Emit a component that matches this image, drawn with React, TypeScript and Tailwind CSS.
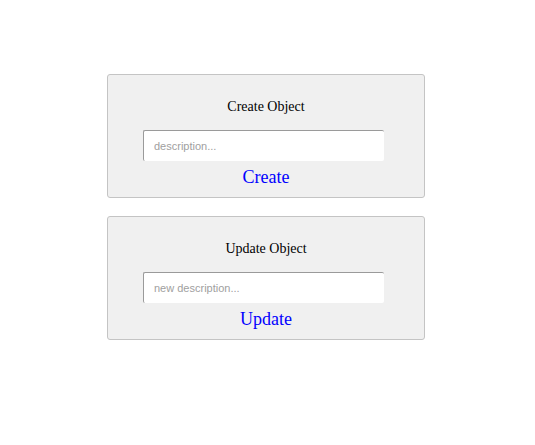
export default function App() {
  return (
    <div className="min-h-[445px] bg-white pl-[107px] pt-[74px] font-['Liberation_Serif',serif]">
      <Panel title="Create Object" placeholder="description..." action="Create" />
      <div className="h-[18px]" />
      <Panel title="Update Object" placeholder="new description..." action="Update" />
    </div>
  );
}

function Panel({ title, placeholder, action }: { title: string; placeholder: string; action: string }) {
  return (
    <div className="flex h-[124px] w-[318px] flex-col items-center rounded-[3px] border border-[#c4c4c4] bg-[#f0f0f0] pt-[24px]">
      <div className="text-[14px] leading-4 text-black">{title}</div>
      <input
        type="text"
        placeholder={placeholder}
        className="mt-[15px] ml-[35px] h-[31px] w-[241px] self-start rounded-[2px] border-t border-l border-[#9a9a9a] bg-white px-[10px] font-['Liberation_Sans',sans-serif] text-[11px] text-black outline-none placeholder:text-[#a0a0a0]"
      />
      <a href="#" className="mt-[6px] text-[18px] leading-[21px] text-[#0000ff]">
        {action}
      </a>
    </div>
  );
}
